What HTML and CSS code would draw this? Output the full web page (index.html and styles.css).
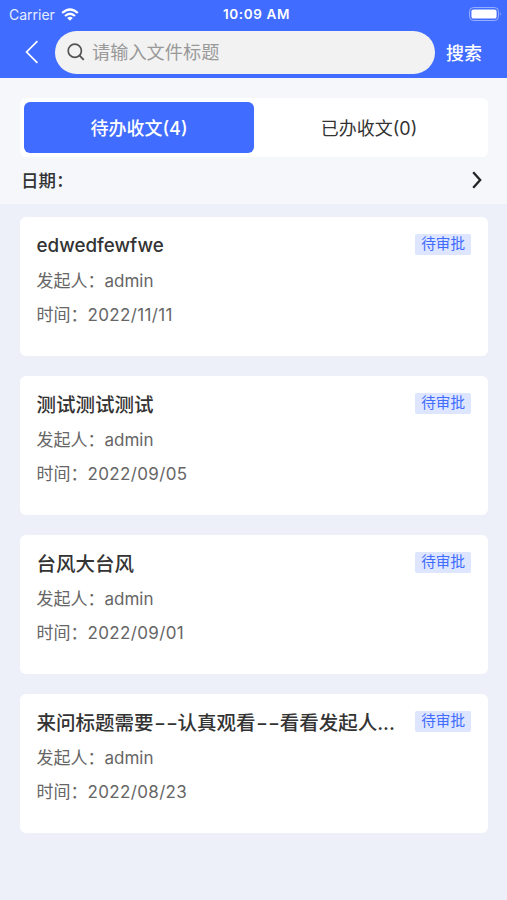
FILE: index.html
```html
<!DOCTYPE html>
<html lang="zh-CN">
<head>
    <meta charset="UTF-8">
    <meta name="viewport" content="width=device-width, initial-scale=1.0">
    <title>收文</title>
    <link rel="stylesheet" href="styles.css">
</head>
<body>
    <header class="header">
        <div class="status-bar">
            <div class="carrier">
                <span>Carrier</span>
                <svg class="wifi" viewBox="0 0 18 13" width="18" height="13">
                    <path d="M1.2 5 Q9 -2 16.8 5" fill="none" stroke="#fff" stroke-width="2.3"/>
                    <path d="M4 8 Q9 3.6 14 8" fill="none" stroke="#fff" stroke-width="2.3"/>
                    <path d="M6.2 9.9 Q9 7.7 11.8 9.9 L9 12.7 Z" fill="#fff"/>
                </svg>
            </div>
            <div class="clock">10:09 AM</div>
            <svg class="battery" viewBox="0 0 33 14" width="33" height="14">
                <rect x="0.5" y="0.5" width="29" height="13" rx="4" fill="none" stroke="#fff" stroke-opacity="0.45"/>
                <rect x="2.4" y="2.4" width="25.2" height="9.2" rx="2.2" fill="#fff"/>
                <path d="M31 4.8 Q32.6 7 31 9.2 Z" fill="#fff" fill-opacity="0.5"/>
            </svg>
        </div>
        <div class="nav">
            <svg class="back" viewBox="0 0 14 24" width="14" height="24">
                <path d="M12.4 1.2 L1.6 12 L12.4 22.8" fill="none" stroke="#fff" stroke-width="1.7"/>
            </svg>
            <div class="search-box">
                <svg viewBox="0 0 18 18" width="18" height="18">
                    <circle cx="7.8" cy="7.8" r="6.6" fill="none" stroke="#555" stroke-width="1.7"/>
                    <path d="M12.5 12.5 L16.8 16.8" stroke="#555" stroke-width="1.8"/>
                </svg>
                <span>请输入文件标题</span>
            </div>
            <div class="search-btn">搜索</div>
        </div>
    </header>

    <section class="filter">
        <div class="tabs">
            <div class="tab active">待办收文(4)</div>
            <div class="tab">已办收文(0)</div>
        </div>
        <div class="date-row">
            <span>日期：</span>
            <svg viewBox="0 0 10 18" width="10" height="18">
                <path d="M1.2 1.2 L8.2 9 L1.2 16.8" fill="none" stroke="#222" stroke-width="2.3"/>
            </svg>
        </div>
    </section>

    <main class="list">
        <div class="card">
            <div class="card-head">
                <div class="title latin">edwedfewfwe</div>
                <div class="tag">待审批</div>
            </div>
            <div class="meta">发起人：<span>admin</span></div>
            <div class="meta">时间：<span class="date">2022/11/11</span></div>
        </div>
        <div class="card">
            <div class="card-head">
                <div class="title">测试测试测试</div>
                <div class="tag">待审批</div>
            </div>
            <div class="meta">发起人：<span>admin</span></div>
            <div class="meta">时间：<span class="date">2022/09/05</span></div>
        </div>
        <div class="card">
            <div class="card-head">
                <div class="title">台风大台风</div>
                <div class="tag">待审批</div>
            </div>
            <div class="meta">发起人：<span>admin</span></div>
            <div class="meta">时间：<span class="date">2022/09/01</span></div>
        </div>
        <div class="card">
            <div class="card-head">
                <div class="title">来问标题需要<span class="dash">--</span>认真观看<span class="dash">--</span>看看发起人...</div>
                <div class="tag">待审批</div>
            </div>
            <div class="meta">发起人：<span>admin</span></div>
            <div class="meta">时间：<span class="date">2022/08/23</span></div>
        </div>
    </main>
</body>
</html>
```

FILE: styles.css
```css
* {
    box-sizing: border-box;
}

body {
    margin: 0;
    min-height: 900px;
    background: #edf0f9;
    font-family: Inter, "Noto Sans CJK SC", sans-serif;
    color: #333;
}

svg {
    display: block;
    flex: none;
}

.header {
    height: 78px;
    background: #406cff;
    color: #fff;
}

.status-bar {
    display: grid;
    grid-template-columns: 1fr auto 1fr;
    align-items: center;
    height: 27px;
    padding: 0 5px 0 9px;
    font-size: 14px;
    line-height: 27px;
}

.carrier {
    display: flex;
    align-items: center;
    gap: 6px;
    height: 26px;
    color: #e6ecff;
}

.clock {
    padding: 1px 0 0 2px;
    font-weight: 600;
    font-size: 13.5px;
    letter-spacing: 0.6px;
}

.battery {
    justify-self: end;
}

.nav {
    display: flex;
    align-items: center;
    height: 50px;
    padding: 0 25px;
}

.search-box {
    display: flex;
    align-items: center;
    gap: 7px;
    width: 380px;
    height: 43px;
    margin: 0 11px 0 16px;
    padding-left: 12px;
    border-radius: 22px;
    background: #f2f2f2;
    color: #999;
    font-size: 18.2px;
    line-height: 42px;
}

.search-btn {
    padding-bottom: 1px;
    font-size: 18px;
    font-weight: 500;
    white-space: nowrap;
}

.filter {
    height: 126px;
    padding: 20px 19px 0 20px;
    background: #f5f7fb;
}

.tabs {
    display: flex;
    height: 59px;
    padding: 4px;
    border-radius: 6px;
    background: #fff;
}

.tab {
    flex: 1;
    border-radius: 6px;
    font-size: 18px;
    line-height: 53px;
    height: 51px;
    text-align: center;
}

.tab.active {
    background: #406cff;
    color: #fff;
    font-weight: 500;
}

.date-row {
    display: flex;
    align-items: center;
    justify-content: space-between;
    height: 45px;
    padding: 0 6px 0 1px;
    font-size: 17.5px;
    font-weight: 500;
}

.list {
    display: flex;
    flex-direction: column;
    gap: 19.9px;
    padding: 13px 19.5px 0 20px;
}

.card {
    height: 139px;
    padding: 10px 16.5px 0 16.5px;
    border-radius: 6px;
    background: #fff;
}

.card-head {
    display: flex;
    align-items: center;
    justify-content: space-between;
    height: 35px;
}

.title {
    font-size: 19.5px;
    font-weight: 500;
    white-space: nowrap;
}

.latin {
    padding-top: 1px;
    font-size: 18.8px;
}

/* widened so each dash reads as a separate long stroke */
.dash {
    display: inline-block;
    margin: 0 3px;
    transform: scaleX(1.33);
}

.tag {
    height: 21px;
    padding: 0 6px;
    border-radius: 2px;
    background: #dde5ff;
    color: #406cff;
    font-size: 14.6px;
    line-height: 20px;
}

.meta {
    height: 34px;
    color: #666;
    font-size: 17px;
    line-height: 38px;
}

.date {
    letter-spacing: 0.35px;
}
```
